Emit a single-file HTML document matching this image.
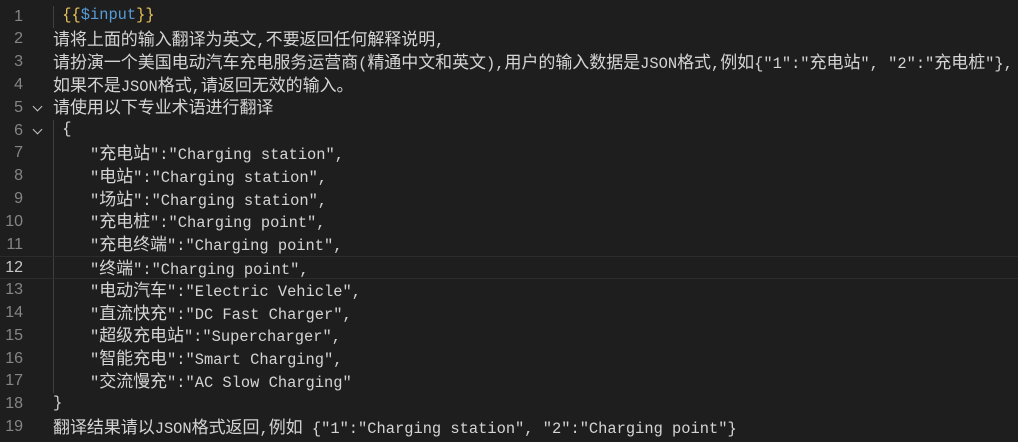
<!DOCTYPE html>
<html><head><meta charset="utf-8"><style>
html,body{margin:0;padding:0;background:#1e1e1e;width:1018px;height:442px;overflow:hidden}
body{position:relative;font-family:"Liberation Mono","Noto Sans CJK SC",monospace;font-size:15.4px;color:#d4d4d4}
.l{position:absolute;left:0;width:1018px;height:22.8px;line-height:22.8px;white-space:pre}
.n{position:absolute;right:995px;top:0;color:#858585;font-size:16px;font-family:"Liberation Sans",sans-serif}
.t{position:absolute;left:53px;top:-1.5px}
i{font-style:normal;font-family:"Noto Sans CJK SC",sans-serif;font-size:17px;letter-spacing:-0.05px}
.cur{border-top:1px solid #2c2c2c;border-bottom:1px solid #2c2c2c;box-sizing:border-box}
.cur .n{color:#c6c6c6}
.g{position:absolute;left:53px;width:1px;background:#404040}
.f{position:absolute;left:34px;top:6px;width:6px;height:6px;border-right:1.4px solid #c5c5c5;border-bottom:1.4px solid #c5c5c5;transform:rotate(45deg)}
.y{color:#e8c15a}.b{color:#569cd6}
</style></head><body>
<div class="g" style="top:5.6px;height:22.8px"></div>
<div class="g" style="top:119.6px;height:273.6px"></div>
<div class="l" style="top:5.6px"><span class="n">1</span><span class="t"> <span class="y">{{</span><span class="b">$input</span><span class="y">}}</span></span></div>
<div class="l" style="top:28.4px"><span class="n">2</span><span class="t"><i>请将上面的输入翻译为英文</i>,<i>不要返回任何解释说明</i>,</span></div>
<div class="l" style="top:51.2px"><span class="n">3</span><span class="t"><i>请扮演一个美国电动汽车充电服务运营商</i>(<i>精通中文和英文</i>),<i>用户的输入数据是</i>JSON<i>格式</i>,<i>例如</i>{"1":"<i>充电站</i>", "2":"<i>充电桩</i>"},</span></div>
<div class="l" style="top:74px"><span class="n">4</span><span class="t"><i>如果不是</i>JSON<i>格式</i>,<i>请返回无效的输入。</i></span></div>
<div class="l" style="top:96.8px"><span class="n">5</span><span class="f"></span><span class="t"><i>请使用以下专业术语进行翻译</i></span></div>
<div class="l" style="top:119.6px"><span class="n">6</span><span class="f"></span><span class="t"> {</span></div>
<div class="l" style="top:142.4px"><span class="n">7</span><span class="t">    "<i>充电站</i>":"Charging station",</span></div>
<div class="l" style="top:165.2px"><span class="n">8</span><span class="t">    "<i>电站</i>":"Charging station",</span></div>
<div class="l" style="top:188px"><span class="n">9</span><span class="t">    "<i>场站</i>":"Charging station",</span></div>
<div class="l" style="top:210.8px"><span class="n">10</span><span class="t">    "<i>充电桩</i>":"Charging point",</span></div>
<div class="l" style="top:233.6px"><span class="n">11</span><span class="t">    "<i>充电终端</i>":"Charging point",</span></div>
<div class="l cur" style="top:256.4px"><span class="n">12</span><span class="t">    "<i>终端</i>":"Charging point",</span></div>
<div class="l" style="top:279.2px"><span class="n">13</span><span class="t">    "<i>电动汽车</i>":"Electric Vehicle",</span></div>
<div class="l" style="top:302px"><span class="n">14</span><span class="t">    "<i>直流快充</i>":"DC Fast Charger",</span></div>
<div class="l" style="top:324.8px"><span class="n">15</span><span class="t">    "<i>超级充电站</i>":"Supercharger",</span></div>
<div class="l" style="top:347.6px"><span class="n">16</span><span class="t">    "<i>智能充电</i>":"Smart Charging",</span></div>
<div class="l" style="top:370.4px"><span class="n">17</span><span class="t">    "<i>交流慢充</i>":"AC Slow Charging"</span></div>
<div class="l" style="top:393.2px"><span class="n">18</span><span class="t">}</span></div>
<div class="l" style="top:416px"><span class="n">19</span><span class="t"><i>翻译结果请以</i>JSON<i>格式返回</i>,<i>例如</i> {"1":"Charging station", "2":"Charging point"}</span></div>
</body></html>
